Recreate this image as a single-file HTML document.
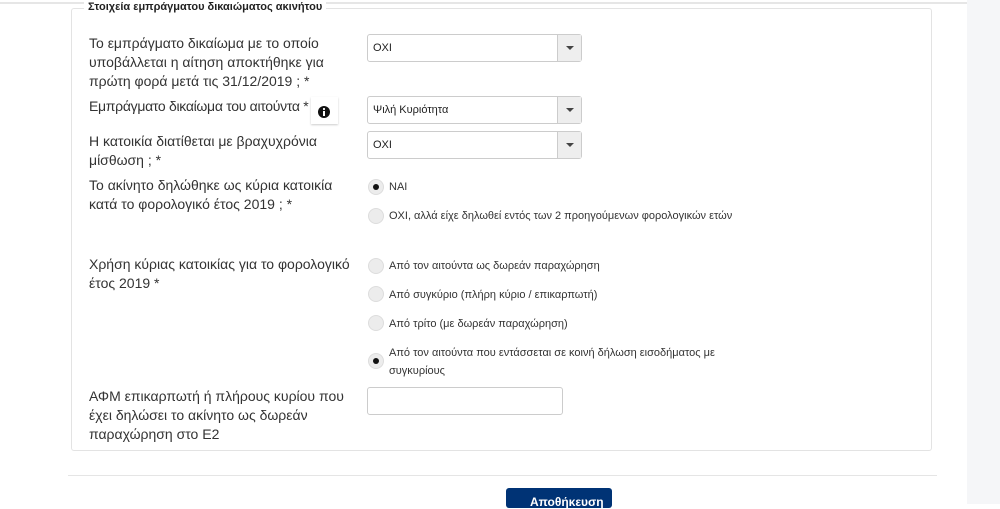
<!DOCTYPE html>
<html><head><meta charset="utf-8"><style>
*{box-sizing:border-box;margin:0;padding:0}
body{width:1000px;height:504px;overflow:hidden;background:#fff;font-family:"Liberation Sans",sans-serif;color:#333;position:relative}
.a{position:absolute}
.topline{left:0;top:2px;width:967px;height:2px;background:#e6e6e6}
.strip{left:967px;top:0;width:33px;height:504px;background:#f5f6f8}
.fs{left:71px;top:8px;width:861px;height:443px;border:1px solid #e3e3e3;border-radius:3px}
.lg{left:12px;top:-8px;background:#fff;padding:0 4px;font-size:11px;font-weight:bold;color:#222;line-height:13px}
.lbl{left:89px;font-size:14px;line-height:19px;color:#333;width:270px}
.sel{left:367px;width:215px;height:28px;border:1px solid #ccc;border-radius:3px;font-size:11px;padding-left:5px;line-height:26px;color:#222}
.sel .ar{position:absolute;right:0;top:0;width:24px;height:26px;background:#eee;border-left:1px solid #ccc}
.sel .ar:after{content:"";position:absolute;left:8px;top:11px;border-left:4px solid transparent;border-right:4px solid transparent;border-top:4px solid #444}
.rd{left:368px;width:16px;height:16px;border-radius:50%;background:#ececec;border:1px solid #ddd}
.rd.on:after{content:"";position:absolute;left:4px;top:4px;width:6px;height:6px;border-radius:50%;background:#111}
.rt{left:389px;font-size:11px;color:#333;line-height:18px}
</style></head><body>
<div class="a topline"></div>
<div class="a strip"></div>
<div class="a fs"><div class="a lg">Στοιχεία εμπράγματου δικαιώματος ακινήτου</div></div>

<div class="a lbl" style="top:34px">Το εμπράγματο δικαίωμα με το οποίο υποβάλλεται η αίτηση αποκτήθηκε για πρώτη φορά μετά τις 31/12/2019 ; *</div>
<div class="a sel" style="top:34px">ΟΧΙ<div class="ar"></div></div>

<div class="a lbl" style="top:97px;letter-spacing:-0.3px;width:240px;white-space:nowrap">Εμπράγματο δικαίωμα του αιτούντα *</div>
<div class="a" style="left:311px;top:97px;width:27px;height:27px;background:#fff;box-shadow:0 1px 2px rgba(0,0,0,.2)"><svg width="27" height="27"><circle cx="13" cy="15" r="6" fill="#111"/><rect x="12" y="14" width="2" height="5" fill="#fff"/><circle cx="13" cy="12" r="1.1" fill="#fff"/></svg></div>
<div class="a sel" style="top:96px">Ψιλή Κυριότητα<div class="ar"></div></div>

<div class="a lbl" style="top:132px">Η κατοικία διατίθεται με βραχυχρόνια μίσθωση ; *</div>
<div class="a sel" style="top:131px">ΟΧΙ<div class="ar"></div></div>

<div class="a lbl" style="top:176px">Το ακίνητο δηλώθηκε ως κύρια κατοικία κατά το φορολογικό έτος 2019 ; *</div>
<div class="a rd on" style="top:179px"></div><div class="a rt" style="top:178px">ΝΑΙ</div>
<div class="a rd" style="top:208px"></div><div class="a rt" style="top:207px">ΟΧΙ, αλλά είχε δηλωθεί εντός των 2 προηγούμενων φορολογικών ετών</div>

<div class="a lbl" style="top:255px">Χρήση κύριας κατοικίας για το φορολογικό έτος 2019 *</div>
<div class="a rd" style="top:258px"></div><div class="a rt" style="top:257px">Από τον αιτούντα ως δωρεάν παραχώρηση</div>
<div class="a rd" style="top:286px"></div><div class="a rt" style="top:286px">Από συγκύριο (πλήρη κύριο / επικαρπωτή)</div>
<div class="a rd" style="top:315px"></div><div class="a rt" style="top:315px">Από τρίτο (με δωρεάν παραχώρηση)</div>
<div class="a rd on" style="top:353px"></div><div class="a rt" style="top:344px;width:380px">Από τον αιτούντα που εντάσσεται σε κοινή δήλωση εισοδήματος με συγκυρίους</div>

<div class="a lbl" style="top:387px">ΑΦΜ επικαρπωτή ή πλήρους κυρίου που έχει δηλώσει το ακίνητο ως δωρεάν παραχώρηση στο Ε2</div>
<div class="a" style="left:367px;top:387px;width:196px;height:28px;border:1px solid #ccc;border-radius:3px"></div>

<div class="a" style="left:68px;top:475px;width:869px;height:1px;background:#e5e5e5"></div>
<div class="a" style="left:506px;top:488px;width:106px;height:20px;background:#003375;border-radius:3px;color:#fff;font-size:12px;font-weight:bold;padding:8px 0 0 24px;line-height:12px">Αποθήκευση</div>
</body></html>
